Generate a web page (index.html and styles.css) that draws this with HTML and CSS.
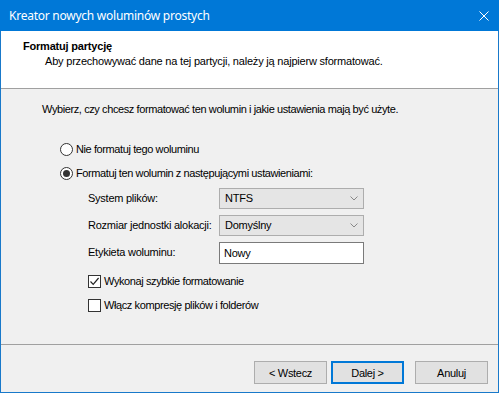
FILE: index.html
```html
<!DOCTYPE html>
<html lang="pl">
<head>
  <meta charset="UTF-8">
  <title>Kreator nowych woluminów prostych</title>
  <link rel="stylesheet" href="styles.css">
</head>
<body>
  <div class="window">
    <!-- Title bar -->
    <div class="titlebar">
      <span class="title">Kreator nowych woluminów prostych</span>
      <svg class="close" width="10" height="10" viewBox="0 0 10 10">
        <path d="M0.5 0.5 L9.5 9.5 M9.5 0.5 L0.5 9.5" stroke="#fff" stroke-width="1" fill="none"/>
      </svg>
    </div>

    <!-- Wizard header -->
    <div class="header">
      <div class="header-title">Formatuj partycję</div>
      <div class="header-sub">Aby przechowywać dane na tej partycji, należy ją najpierw sformatować.</div>
    </div>

    <!-- Page content -->
    <div class="content">
      <p class="intro">Wybierz, czy chcesz formatować ten wolumin i jakie ustawienia mają być użyte.</p>

      <div class="options">
        <label class="option">
          <span class="radio"></span>
          <span>Nie formatuj tego woluminu</span>
        </label>
        <label class="option">
          <span class="radio checked"></span>
          <span>Formatuj ten wolumin z następującymi ustawieniami:</span>
        </label>
      </div>

      <div class="settings">
        <span class="field-label">System plików:</span>
        <div class="combo">
          <span>NTFS</span>
          <svg width="8" height="5" viewBox="0 0 8 5"><path d="M0.5 0.5 L4 4 L7.5 0.5" stroke="#888" fill="none"/></svg>
        </div>

        <span class="field-label">Rozmiar jednostki alokacji:</span>
        <div class="combo">
          <span>Domyślny</span>
          <svg width="8" height="5" viewBox="0 0 8 5"><path d="M0.5 0.5 L4 4 L7.5 0.5" stroke="#888" fill="none"/></svg>
        </div>

        <span class="field-label">Etykieta woluminu:</span>
        <div class="textbox">Nowy</div>
      </div>

      <div class="checks">
        <label class="option">
          <span class="checkbox">
            <svg width="11" height="11" viewBox="0 0 11 11"><path d="M1.5 5.5 L4.2 8.3 L9.6 2" stroke="#222" stroke-width="1.2" fill="none"/></svg>
          </span>
          <span>Wykonaj szybkie formatowanie</span>
        </label>
        <label class="option">
          <span class="checkbox"></span>
          <span>Włącz kompresję plików i folderów</span>
        </label>
      </div>
    </div>

    <!-- Buttons -->
    <div class="footer">
      <button class="btn">&lt; Wstecz</button>
      <button class="btn btn-default">Dalej &gt;</button>
      <button class="btn btn-cancel">Anuluj</button>
    </div>
  </div>
</body>
</html>
```

FILE: styles.css
```css
/* General */
body {
  margin: 0;
  padding: 0;
  font-family: "Liberation Sans", Arial, sans-serif;
  font-size: 11px;
  letter-spacing: -0.4px;
  color: #000;
  background: #f0f0f0;
}

.window {
  width: 499px;
  height: 393px;
  box-sizing: border-box;
  border: 1px solid #1979ca;
  border-top: none;
  background: #f0f0f0;
  display: flex;
  flex-direction: column;
}

/* Title bar */
.titlebar {
  height: 31px;
  margin: 0 -1px;
  padding: 0 10px 0 9px;
  background: #0078d7;
  display: flex;
  align-items: center;
  justify-content: space-between;
}

.title {
  font-family: "Noto Sans", sans-serif;
  font-size: 12px;
  color: #fff;
  letter-spacing: -0.25px;
}

.close {
  display: block;
}

/* Header */
.header {
  height: 58px;
  box-sizing: border-box;
  padding: 9px 0 0 22px;
  background: #fff;
  border-bottom: 1px solid #a0a0a0;
  line-height: 13px;
}

.header-title {
  font-weight: bold;
  letter-spacing: -0.2px;
}

.header-sub {
  margin-top: 2px;
  padding-left: 22px;
  letter-spacing: -0.2px;
}

/* Content */
.content {
  flex: 1;
  padding: 14px 0 0 41px;
  border-bottom: 1px solid #a0a0a0;
  line-height: 13px;
}

.intro {
  margin: 0;
}

.options {
  margin: 25px 0 0 18px;
  display: flex;
  flex-direction: column;
  gap: 8px;
}

.option {
  height: 16px;
  display: flex;
  align-items: center;
  gap: 3px;
}

.radio {
  width: 11px;
  height: 11px;
  border: 1px solid #333;
  border-radius: 50%;
  background: #fff;
  display: flex;
  align-items: center;
  justify-content: center;
}

.radio.checked::after {
  content: "";
  width: 7px;
  height: 7px;
  border-radius: 50%;
  background: #333;
}

.settings {
  margin: 7px 0 0 46px;
  display: grid;
  grid-template-columns: 131px 145px;
  grid-auto-rows: 21px;
  row-gap: 6px;
  align-items: center;
  letter-spacing: -0.25px;
}

.combo {
  height: 21px;
  box-sizing: border-box;
  border: 1px solid #adadad;
  background: #e5e5e5;
  padding: 0 5px 0 5px;
  display: flex;
  align-items: center;
  justify-content: space-between;
}

.textbox {
  height: 22px;
  box-sizing: border-box;
  border: 1px solid #7a7a7a;
  background: #fff;
  padding: 1px 0 0 4px;
  display: flex;
  align-items: center;
}

.checks {
  margin: 10px 0 0 46px;
  display: flex;
  flex-direction: column;
  gap: 8px;
}

.checkbox {
  width: 11px;
  height: 11px;
  border: 1px solid #333;
  background: #fff;
  display: flex;
  align-items: center;
  justify-content: center;
}

/* Footer */
.footer {
  height: 47px;
  box-sizing: border-box;
  padding: 16px 10px 0 0;
  display: flex;
  justify-content: flex-end;
  align-items: flex-start;
}

.btn {
  width: 73px;
  height: 23px;
  margin: 0 0 0 4px;
  padding: 0;
  font-family: "Liberation Sans", Arial, sans-serif;
  font-size: 11px;
  letter-spacing: -0.3px;
  color: #000;
  background: #e1e1e1;
  border: 1px solid #adadad;
}

.btn-default {
  border: 2px solid #0078d7;
}

.btn-cancel {
  margin-left: 11px;
}
```
